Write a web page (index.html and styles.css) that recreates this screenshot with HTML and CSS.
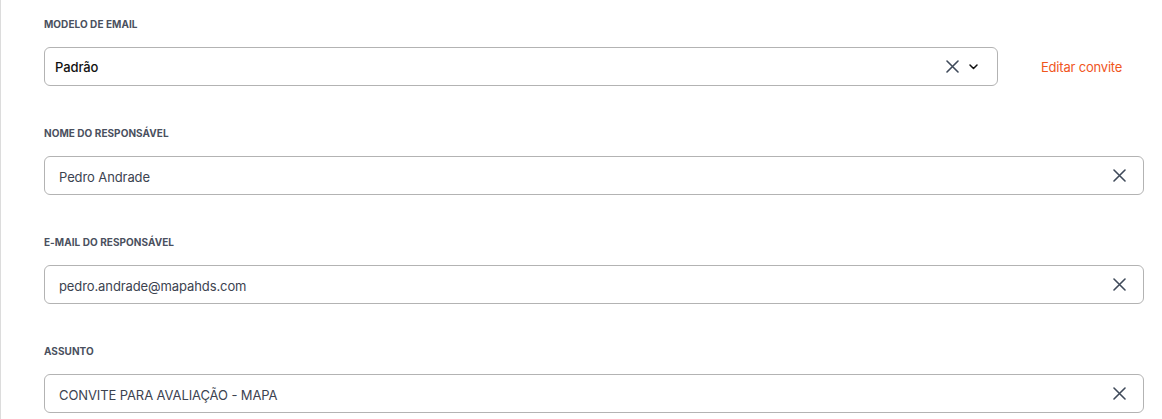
FILE: index.html
```html
<!DOCTYPE html>
<html lang="pt-BR">
<head>
<meta charset="utf-8">
<title>Convite</title>
<link rel="stylesheet" href="styles.css">
</head>
<body>
<main class="panel">
  <section class="field">
    <label class="field-label">Modelo de email</label>
    <div class="select-row">
      <div class="control control-select">
        <span class="value value-strong">Padrão</span>
        <span class="icons">
          <svg class="icon-x" width="13" height="13" viewBox="0 0 13 13"><path d="M1 1L12 12M12 1L1 12" stroke="#3f4a5a" stroke-width="1.6" stroke-linecap="round"/></svg>
          <svg class="icon-chev" width="9" height="6" viewBox="0 0 9 6"><path d="M1 1L4.5 4.5L8 1" stroke="#111" stroke-width="1.5" fill="none" stroke-linecap="round" stroke-linejoin="round"/></svg>
        </span>
      </div>
      <a class="link" href="#">Editar convite</a>
    </div>
  </section>
  <section class="field">
    <label class="field-label">Nome do responsável</label>
    <div class="control">
      <span class="value">Pedro Andrade</span>
      <svg class="icon-x" width="13" height="13" viewBox="0 0 13 13"><path d="M1 1L12 12M12 1L1 12" stroke="#3f4a5a" stroke-width="1.6" stroke-linecap="round"/></svg>
    </div>
  </section>
  <section class="field">
    <label class="field-label">E-mail do responsável</label>
    <div class="control">
      <span class="value">pedro.andrade@mapahds.com</span>
      <svg class="icon-x" width="13" height="13" viewBox="0 0 13 13"><path d="M1 1L12 12M12 1L1 12" stroke="#3f4a5a" stroke-width="1.6" stroke-linecap="round"/></svg>
    </div>
  </section>
  <section class="field">
    <label class="field-label">Assunto</label>
    <div class="control">
      <span class="value">CONVITE PARA AVALIAÇÃO - MAPA</span>
      <svg class="icon-x" width="13" height="13" viewBox="0 0 13 13"><path d="M1 1L12 12M12 1L1 12" stroke="#3f4a5a" stroke-width="1.6" stroke-linecap="round"/></svg>
    </div>
  </section>
</main>
</body>
</html>
```
FILE: styles.css
```css
* { box-sizing: border-box; }
html, body { margin: 0; padding: 0; background: #fff; }
body {
  font-family: Inter, "Noto Sans", "Liberation Sans", sans-serif;
  height: 419px;
  overflow: hidden;
}
.panel {
  border-left: 1px solid #dcdcdc;
  min-height: 419px;
  padding: 18px 18px 0 43px;
  display: flex;
  flex-direction: column;
  gap: 41px;
}
.field { display: flex; flex-direction: column; }
.field-label {
  font-size: 10px;
  line-height: 13px;
  font-weight: 700;
  text-transform: uppercase;
  color: #4a505e;
  margin-bottom: 16px;
  letter-spacing: 0.05px;
}
.select-row {
  display: flex;
  align-items: center;
}
.control {
  height: 39px;
  border: 1px solid #b3b3b3;
  border-radius: 6px;
  display: flex;
  align-items: center;
  justify-content: space-between;
  padding: 0 17px 0 14px;
}
.control-select {
  width: 954px;
  padding: 0 19px 0 10px;
}
.value {
  font-size: 13px;
  line-height: 16px;
  padding-top: 3px;
  color: #3c4350;
  letter-spacing: -0.1px;
}
.value-strong {
  color: #111;
  font-weight: 500;
  font-size: 13px;
  padding-top: 0;
  letter-spacing: -0.1px;
}
.icons { display: flex; align-items: center; gap: 10px; }
.icon-x { display: block; }
.icon-chev { display: block; }
.link {
  margin-left: 43px;
  color: #f0561d;
  font-size: 13px;
  text-decoration: none;
  letter-spacing: -0.2px;
}
```
